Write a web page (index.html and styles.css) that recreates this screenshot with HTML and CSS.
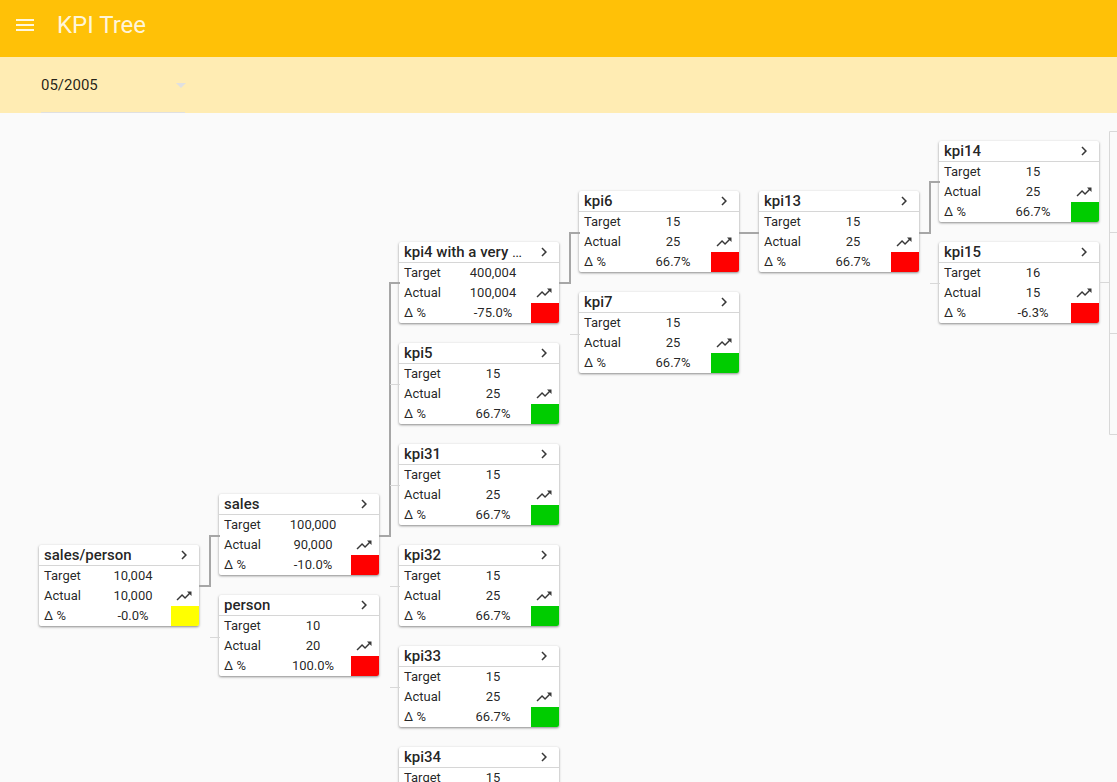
FILE: index.html
```html
<!DOCTYPE html>
<html lang="en">
<head>
<meta charset="utf-8">
<meta name="viewport" content="width=device-width, initial-scale=1">
<title>KPI Tree</title>
<link rel="stylesheet" href="styles.css">
</head>
<body>
<svg class="sprite" aria-hidden="true">
  <symbol id="chevron" viewBox="0 0 24 24"><path d="M10 6L8.59 7.41 13.17 12l-4.58 4.59L10 18l6-6z"/></symbol>
  <symbol id="trend" viewBox="0 0 24 24"><path d="M16 6l2.29 2.29-4.88 4.88-4-4L2 16.59 3.41 18l6-6 4 4 6.3-6.29L22 12V6z"/></symbol>
</svg>

<header class="toolbar">
  <button class="menu-button" type="button" aria-label="Menu">
    <svg viewBox="0 0 24 24" aria-hidden="true"><path d="M3 18h18v-2H3v2zm0-5h18v-2H3v2zm0-7v2h18V6H3z"/></svg>
  </button>
  <h1 class="toolbar-title">KPI Tree</h1>
</header>

<div class="filters">
  <label class="period">
    <select class="period-select" aria-label="Period">
      <option>05/2005</option>
    </select>
    <svg class="period-arrow" viewBox="0 0 10 5" aria-hidden="true"><path d="M0 0h10L5 5z"/></svg>
  </label>
</div>

<main class="canvas">
  <div class="tree" id="tree">
    <svg class="links" aria-hidden="true">
      <g class="link-active">
        <path d="M199 473H210V423H220"/>
        <path d="M379 423H390V170H400"/>
        <path d="M559 170H570V120H580"/>
        <path d="M739 120H759"/>
        <path d="M919 120H930V69H940"/>
      </g>
      <g class="link-idle">
        <path d="M210 524.5H220"/>
        <path d="M390 271.5H400"/>
        <path d="M390 372.5H400"/>
        <path d="M390 473.5H400"/>
        <path d="M390 574.5H400"/>
        <path d="M570 221.5H580"/>
        <path d="M930 170.5H940"/>
        <path d="M1099 169.5H1109"/>
        <path d="M1120 18.5H1109.5V321.5H1120"/>
        <path d="M1109 119.5H1120M1109 220.5H1120"/>
      </g>
    </svg>
  </div>
</main>
<script src="tree.js"></script>
</body>
</html>
```
FILE: styles.css
```css
* {
  box-sizing: border-box;
}

body {
  display: flex;
  flex-direction: column;
  height: 100vh;
  margin: 0;
  background: #fafafa;
  color: rgba(0, 0, 0, 0.87);
  font-family: Roboto, "Liberation Sans", sans-serif;
}

button {
  padding: 0;
  border: 0;
  background: none;
  color: inherit;
  cursor: pointer;
}

svg {
  display: block;
  fill: currentColor;
}

.sprite {
  position: absolute;
  width: 0;
  height: 0;
}

.toolbar {
  display: flex;
  flex: none;
  align-items: center;
  gap: 20px;
  height: 57px;
  padding: 0 13px 7px;
  background: #ffc107;
  color: rgba(255, 255, 255, 0.87);
}

.menu-button svg {
  width: 24px;
  height: 24px;
}

.toolbar-title {
  margin: 0;
  font-size: 24px;
  font-weight: 400;
  line-height: 32px;
}

.filters {
  display: flex;
  flex: none;
  height: 56px;
  padding-left: 41px;
  background: #ffecb3;
}

.period {
  display: flex;
  align-items: center;
  width: 144px;
  padding-top: 1px;
  border-bottom: 1px solid #e0e0e0;
}

.period-select {
  flex: 1;
  height: 24px;
  padding: 0;
  border: 0;
  appearance: none;
  background: none;
  color: inherit;
  font: 15px/24px Roboto, "Liberation Sans", sans-serif;
}

.period-arrow {
  flex: none;
  width: 10px;
  height: 5px;
  margin-right: -1px;
  color: #e0e0e0;
}

.canvas {
  flex: 1;
  min-height: 0;
  overflow: auto;
  scrollbar-width: none;
}

.tree {
  position: relative;
  height: 740px;
}

.links {
  position: absolute;
  inset: 0;
  z-index: 1;
  width: 100%;
  height: 100%;
  fill: none;
  pointer-events: none;
}

.link-active {
  stroke: #a6a6a6;
  stroke-width: 2;
}

.link-idle {
  stroke: #d8d8d8;
  stroke-width: 1;
}

.node {
  position: absolute;
  width: 160px;
  border-radius: 2px;
  background: #fff;
  box-shadow: 0 1px 3px rgba(0, 0, 0, 0.28), 0 1px 2px rgba(0, 0, 0, 0.2);
  overflow: hidden;
}

.node-head {
  display: flex;
  align-items: center;
  height: 21px;
  padding-left: 5px;
  border-bottom: 1px solid #d6d6d6;
}

.node-title {
  flex: 1;
  margin: 0;
  overflow: hidden;
  font-size: 15px;
  font-weight: 400;
  line-height: 20px;
  text-overflow: ellipsis;
  white-space: nowrap;
}

.node-title span {
  font-weight: 500;
}

.icon-button {
  display: flex;
  align-items: center;
  justify-content: center;
  width: 28px;
  height: 20px;
  padding-right: 2px;
  color: rgba(0, 0, 0, 0.78);
}

.icon-button svg {
  width: 18px;
  height: 18px;
}

.values {
  width: 100%;
  border-collapse: collapse;
  table-layout: fixed;
  font-size: 13px;
  line-height: 20px;
}

.values th,
.values td {
  height: 20px;
  padding: 0;
  font-weight: 400;
}

.values th {
  width: 56px;
  padding-left: 5px;
  text-align: left;
}

.values td {
  text-align: center;
}

.values .side {
  width: 28px;
}

.values .red {
  background: #f00;
}

.values .green {
  background: #0c0;
}

.values .yellow {
  background: #ff0;
}
```
FILE: tree.js
```js
const nodes = [
  { x: 39, y: 432, name: "sales/person", target: "10,004", actual: "10,000", delta: "-0.0%", status: "yellow" },
  { x: 219, y: 381, name: "sales", target: "100,000", actual: "90,000", delta: "-10.0%", status: "red" },
  { x: 219, y: 482, name: "person", target: "10", actual: "20", delta: "100.0%", status: "red" },
  { x: 399, y: 129, name: "kpi4 with a very wide name", target: "400,004", actual: "100,004", delta: "-75.0%", status: "red" },
  { x: 399, y: 230, name: "kpi5", target: "15", actual: "25", delta: "66.7%", status: "green" },
  { x: 399, y: 331, name: "kpi31", target: "15", actual: "25", delta: "66.7%", status: "green" },
  { x: 399, y: 432, name: "kpi32", target: "15", actual: "25", delta: "66.7%", status: "green" },
  { x: 399, y: 533, name: "kpi33", target: "15", actual: "25", delta: "66.7%", status: "green" },
  { x: 399, y: 634, name: "kpi34", target: "15", actual: "25", delta: "66.7%", status: "green" },
  { x: 579, y: 78, name: "kpi6", target: "15", actual: "25", delta: "66.7%", status: "red" },
  { x: 579, y: 179, name: "kpi7", target: "15", actual: "25", delta: "66.7%", status: "green" },
  { x: 759, y: 78, name: "kpi13", target: "15", actual: "25", delta: "66.7%", status: "red" },
  { x: 939, y: 28, name: "kpi14", target: "15", actual: "25", delta: "66.7%", status: "green" },
  { x: 939, y: 129, name: "kpi15", target: "16", actual: "15", delta: "-6.3%", status: "red" }
];

const icon = (id, label) =>
  `<button class="icon-button" type="button" aria-label="${label}"><svg aria-hidden="true"><use href="#${id}"/></svg></button>`;

const card = (n) => `
  <article class="node" style="left:${n.x}px;top:${n.y}px">
    <div class="node-head">
      <h2 class="node-title"><span>${n.name}</span></h2>
      ${icon("chevron", "Open " + n.name)}
    </div>
    <table class="values">
      <tr><th scope="row">Target</th><td>${n.target}</td><td class="side"></td></tr>
      <tr><th scope="row">Actual</th><td>${n.actual}</td><td class="side">${icon("trend", "Trend of " + n.name)}</td></tr>
      <tr><th scope="row">Δ %</th><td>${n.delta}</td><td class="side ${n.status}"></td></tr>
    </table>
  </article>`;

document.getElementById("tree").insertAdjacentHTML("beforeend", nodes.map(card).join(""));
```
